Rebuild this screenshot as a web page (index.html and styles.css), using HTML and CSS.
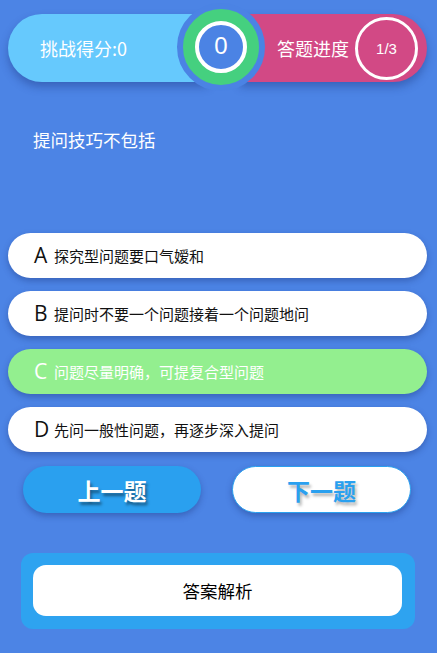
FILE: index.html
```html
<!DOCTYPE html>
<html lang="zh-CN">
<head>
<meta charset="utf-8">
<title>答题</title>
<link rel="stylesheet" href="styles.css">
</head>
<body>
<div class="page">
  <header class="scorebar">
    <div class="pill pill-score"><span class="pill-label">挑战得分:0</span></div>
    <div class="pill pill-progress">
      <span class="pill-label">答题进度</span>
      <span class="progress-ring">1/3</span>
    </div>
    <div class="medal"><div class="medal-inner">0</div></div>
  </header>

  <h1 class="question">提问技巧不包括</h1>

  <ul class="options">
    <li class="option"><span class="opt-letter">A</span><span class="opt-text">探究型问题要口气嫒和</span></li>
    <li class="option"><span class="opt-letter">B</span><span class="opt-text">提问时不要一个问题接着一个问题地问</span></li>
    <li class="option option-correct"><span class="opt-letter">C</span><span class="opt-text">问题尽量明确，可提复合型问题</span></li>
    <li class="option"><span class="opt-letter">D</span><span class="opt-text">先问一般性问题，再逐步深入提问</span></li>
  </ul>

  <div class="nav">
    <button class="nav-btn nav-prev">上一题</button>
    <button class="nav-btn nav-next">下一题</button>
  </div>

  <div class="analysis">
    <div class="analysis-inner">答案解析</div>
  </div>
</div>
</body>
</html>
```

FILE: styles.css
```css
* { box-sizing: border-box; }
html, body {
  margin: 0;
  padding: 0;
  background: #4c84e5;
}
body {
  font-family: "Noto Sans CJK SC", "Noto Sans", sans-serif;
  color: #fff;
}
.page {
  width: 437px;
  height: 653px;
  overflow: hidden;
  padding-top: 14px;
}
.scorebar {
  position: relative;
  display: flex;
  justify-content: space-between;
  padding: 0 10px 0 8px;
  height: 68px;
}
.pill {
  height: 68px;
  display: flex;
  align-items: center;
  box-shadow: 0 5px 8px rgba(20, 40, 110, 0.35);
}
.pill-score {
  width: 200px;
  background: #66c9fd;
  border-radius: 34px 0 0 34px;
  padding-left: 32px;
}
.pill-progress {
  width: 187px;
  background: #d24985;
  border-radius: 0 34px 34px 0;
  padding-left: 37px;
  gap: 6px;
}
.pill-label {
  font-size: 18px;
  line-height: 24px;
  white-space: nowrap;
}
.progress-ring {
  width: 63px;
  height: 63px;
  border: 3px solid #fff;
  border-radius: 50%;
  display: flex;
  align-items: center;
  justify-content: center;
  font-size: 15px;
  font-family: "Liberation Sans", sans-serif;
}
.medal {
  position: absolute;
  left: 177px;
  top: -11px;
  width: 88px;
  height: 88px;
  border-radius: 50%;
  background: #45d07f;
  border: 6px solid #4b83e4;
  display: flex;
  align-items: center;
  justify-content: center;
}
.medal-inner {
  width: 52px;
  height: 52px;
  border-radius: 50%;
  border: 4px solid #fff;
  background: #4b83e4;
  display: flex;
  align-items: center;
  justify-content: center;
  font-family: "Liberation Sans", sans-serif;
  font-size: 24px;
  line-height: 1;
  padding-bottom: 2px;
}
.question {
  margin: 46px 0 0 33px;
  font-size: 17.5px;
  font-weight: normal;
  line-height: 24px;
  height: 24px;
}
.options {
  list-style: none;
  margin: 81px 0 0;
  padding: 0 10px 0 8px;
  display: flex;
  flex-direction: column;
  gap: 13px;
}
.option {
  height: 45px;
  background: #fff;
  border-radius: 23px;
  display: flex;
  align-items: center;
  padding-left: 26px;
  color: #111;
  box-shadow: 0 3px 6px rgba(20, 40, 110, 0.35);
}
.option-correct {
  background: #93ef8f;
  color: #fff;
}
.opt-letter {
  font-size: 21px;
  line-height: 1;
  width: 20px;
  font-family: "Open Sans", "Noto Sans", sans-serif;
}
.opt-text {
  font-size: 15px;
  line-height: 20px;
}
.nav {
  display: flex;
  gap: 31px;
  margin-top: 14px;
  padding-left: 23px;
}
.nav-btn {
  width: 178px;
  height: 47px;
  border-radius: 24px;
  font-family: "Noto Sans CJK SC", sans-serif;
  font-size: 23px;
  font-weight: bold;
  letter-spacing: 0;
  padding: 0;
  cursor: pointer;
  box-shadow: 0 3px 6px rgba(20, 40, 110, 0.35);
}
.nav-prev {
  background: #2aa0ef;
  color: #fff;
  border: none;
  text-shadow: 2px 3px 3px rgba(0, 0, 0, 0.45);
}
.nav-next {
  width: 179px;
  background: #fff;
  color: #2aa0ef;
  border: 1px solid #2aa0ef;
  text-shadow: 2px 3px 3px rgba(0, 0, 0, 0.3);
}
.analysis {
  margin: 40px 0 0 21px;
  width: 394px;
  height: 76px;
  background: #2ea3f0;
  border-radius: 12px;
  padding: 12px 13px 0 12px;
}
.analysis-inner {
  height: 51px;
  background: #fff;
  border-radius: 13px;
  display: flex;
  align-items: center;
  justify-content: center;
  color: #000;
  font-size: 17.5px;
}
```
